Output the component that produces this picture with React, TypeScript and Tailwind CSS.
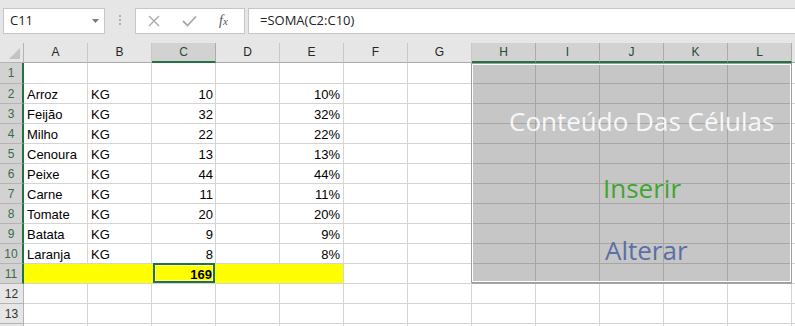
import React from "react";

const data: [string, string, number, string][] = [
  ["Arroz", "KG", 10, "10%"],
  ["Feijão", "KG", 32, "32%"],
  ["Milho", "KG", 22, "22%"],
  ["Cenoura", "KG", 13, "13%"],
  ["Peixe", "KG", 44, "44%"],
  ["Carne", "KG", 11, "11%"],
  ["Tomate", "KG", 20, "20%"],
  ["Batata", "KG", 9, "9%"],
  ["Laranja", "KG", 8, "8%"],
];

const cols = ["A", "B", "C", "D", "E", "F", "G", "H", "I", "J", "K", "L"];

function Cell({ children, className = "" }: { children?: React.ReactNode; className?: string }) {
  return (
    <div
      className={
        "relative w-[64px] shrink-0 border-r border-b border-[#d4d4d4] font-['Liberation_Sans',sans-serif] text-[13px] leading-[21px] text-black whitespace-nowrap " +
        className
      }
    >
      {children}
    </div>
  );
}

function GrayCell() {
  return <div className="w-[64px] shrink-0 border-r border-b border-[#a6a6a6] bg-[#c6c6c6]" />;
}

function RowHeader({ n, selected, h }: { n?: number; selected: boolean; h: string }) {
  return (
    <div
      className={
        "w-[24px] shrink-0 border-b border-b-[#b4b4b4] text-center font-['Liberation_Sans',sans-serif] text-[12px] " +
        h +
        (selected
          ? " bg-[#d2d2d2] border-r-2 border-r-[#217346] text-[#3d6b45]"
          : " bg-[#e6e6e6] border-r border-r-[#b4b4b4] text-[#333]")
      }
      style={{ lineHeight: h === "h-[21px]" ? "21px" : "20px" }}
    >
      {n}
    </div>
  );
}

export default function App() {
  return (
    <div className="w-[795px] h-[326px] overflow-hidden bg-white font-['Open_Sans',sans-serif]">
      {/* Formula bar */}
      <div className="h-[43px] bg-[#e6e6e6] flex items-start pt-[8px]">
        <div className="ml-[3px] w-[102px] h-[26px] bg-white border border-[#c6c6c6] flex items-center pl-[6px] pr-[5px]">
          <span className="text-[13px] text-[#222] flex-1">C11</span>
          <svg width="7" height="4" viewBox="0 0 7 4">
            <polygon points="0,0 7,0 3.5,4" fill="#7a7a7a" />
          </svg>
        </div>
        <div className="ml-[14px] mt-[7px] flex flex-col gap-[2px]">
          <div className="w-[2px] h-[2px] bg-[#b0b0b0]" />
          <div className="w-[2px] h-[2px] bg-[#b0b0b0]" />
          <div className="w-[2px] h-[2px] bg-[#b0b0b0]" />
        </div>
        <div className="ml-[14px] w-[110px] h-[26px] bg-white border border-[#c6c6c6] flex items-center">
          <svg className="ml-[12px]" width="12" height="12" viewBox="0 0 12 12">
            <path d="M1 1 L11 11 M11 1 L1 11" stroke="#a8a8a8" strokeWidth="1.3" fill="none" />
          </svg>
          <svg className="ml-[22px]" width="15" height="12" viewBox="0 0 15 12">
            <path d="M1 6 L5.5 10.5 L14 1.5" stroke="#a8a8a8" strokeWidth="1.8" fill="none" />
          </svg>
          <span className="ml-[22px] font-['Liberation_Serif',serif] italic text-[14px] text-[#555] leading-none">
            f<span className="text-[11px]">x</span>
          </span>
        </div>
        <div className="ml-[3px] flex-1 h-[26px] bg-white border border-[#c6c6c6] border-r-0 flex items-center pl-[11px]">
          <span className="text-[13px] text-[#222]">=SOMA(C2:C10)</span>
        </div>
      </div>

      {/* Grid */}
      <div className="relative">
        {/* Column headers */}
        <div className="flex h-[20px]">
          <div className="w-[24px] shrink-0 bg-[#e6e6e6] border-r border-b border-[#b4b4b4] relative">
            <svg className="absolute left-[9px] top-[5px]" width="11" height="11" viewBox="0 0 11 11">
              <polygon points="11,0 11,11 0,11" fill="#c3c3c3" />
            </svg>
          </div>
          {cols.map((c) => {
            const sel = c === "C" || ["H", "I", "J", "K", "L"].includes(c);
            return (
              <div
                key={c}
                className={
                  "w-[64px] shrink-0 border-r text-center font-['Liberation_Sans',sans-serif] text-[12px] leading-[19px] " +
                  (sel
                    ? "bg-[#d2d2d2] border-r-[#ababab] border-b-2 border-b-[#217346] text-[#1f4d35]"
                    : "bg-[#e6e6e6] border-r-[#c8c8c8] border-b border-b-[#ababab] text-[#262626]")
                }
              >
                {c}
              </div>
            );
          })}
          <div className="flex-1 bg-[#e6e6e6] border-b border-b-[#ababab]" />
        </div>

        {/* Row 1 */}
        <div className="flex h-[21px]">
          <RowHeader n={1} selected h="h-[21px]" />
          {cols.slice(0, 7).map((c) => (
            <Cell key={c} />
          ))}
          {cols.slice(7).map((c) => (
            <GrayCell key={c} />
          ))}
          <div className="flex-1 border-b border-[#d4d4d4]" />
        </div>

        {/* Rows 2-10 */}
        {data.map(([name, unit, qty, pct], i) => (
          <div key={name} className="flex h-[20px]">
            <RowHeader n={i + 2} selected h="h-[20px]" />
            <Cell className="pl-[3px]">{name}</Cell>
            <Cell className="pl-[3px]">{unit}</Cell>
            <Cell className="text-right pr-[2px]">{qty}</Cell>
            <Cell />
            <Cell className="text-right pr-[3px]">{pct}</Cell>
            <Cell />
            <Cell />
            {cols.slice(7).map((c) => (
              <GrayCell key={c} />
            ))}
            <div className="flex-1 border-b border-[#d4d4d4]" />
          </div>
        ))}

        {/* Row 11 */}
        <div className="flex h-[20px]">
          <RowHeader n={11} selected h="h-[20px]" />
          <Cell className="bg-[#ffff00] border-r-[#ffff00]" />
          <Cell className="bg-[#ffff00] border-r-[#ffff00]" />
          <Cell className="bg-[#ffff00] border-r-[#ffff00] text-right pr-[3px] font-bold">
            <div className="absolute left-[1px] top-[-1px] w-[62px] h-[20px] border-2 border-[#217346] shadow-[inset_0_0_0_1px_#fdfd9a]" />
            <span className="relative">169</span>
          </Cell>
          <Cell className="bg-[#ffff00] border-r-[#ffff00]" />
          <Cell className="bg-[#ffff00]" />
          <Cell />
          <Cell />
          {cols.slice(7).map((c) => (
            <GrayCell key={c} />
          ))}
          <div className="flex-1 border-b border-[#d4d4d4]" />
        </div>

        {/* Rows 12-14 */}
        {[12, 13, 0].map((n) => (
          <div key={n} className="flex h-[20px]">
            <RowHeader n={n || undefined} selected={false} h="h-[20px]" />
            {cols.map((c) => (
              <Cell key={c} />
            ))}
            <div className="flex-1 border-b border-[#d4d4d4]" />
          </div>
        ))}

        {/* Shape overlay */}
        <div className="absolute left-[471px] top-[20px] w-[321px] h-[220px] border border-[#9e9e9e] shadow-[inset_0_0_0_1px_#ffffff]">
          <div className="absolute left-[37px] top-[44px] text-[26px] leading-[26px] text-[#f7f7f7] whitespace-nowrap">
            Conteúdo Das Células
          </div>
          <div className="absolute left-[131px] top-[111px] text-[26px] leading-[26px] text-[#3fa62e] whitespace-nowrap">
            Inserir
          </div>
          <div className="absolute left-[133px] top-[173px] text-[26px] leading-[26px] text-[#5a6fa8] whitespace-nowrap">
            Alterar
          </div>
        </div>
      </div>
    </div>
  );
}
